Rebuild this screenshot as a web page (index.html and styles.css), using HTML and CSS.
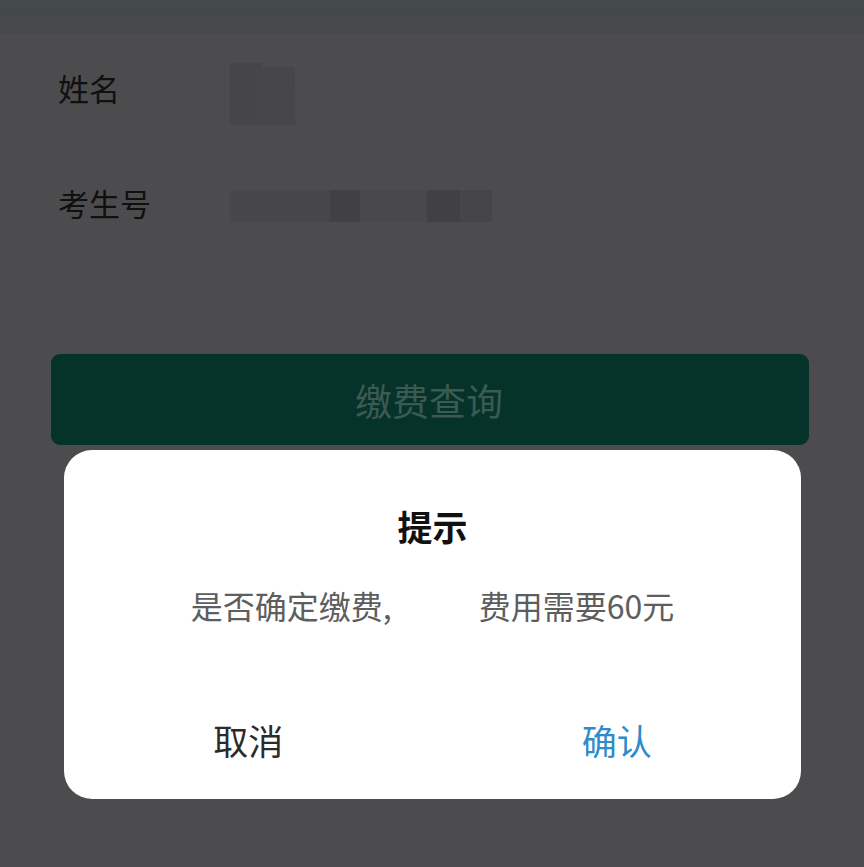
FILE: index.html
```html
<!DOCTYPE html>
<html lang="zh-CN">
<head>
<meta charset="utf-8">
<title>缴费查询</title>
<link rel="stylesheet" href="styles.css">
</head>
<body>
<div class="page">
  <div class="topbar"></div>
  <div class="form">
    <div class="row">
      <div class="label">姓名</div>
      <div class="value name-blur">
        <span class="px px-a"></span><span class="px px-b"></span><span class="px px-c"></span>
      </div>
    </div>
    <div class="row">
      <div class="label">考生号</div>
      <div class="value id-blur">
        <span class="seg s1"></span><span class="seg s2"></span><span class="seg s3"></span><span class="seg s4"></span><span class="seg s5"></span>
      </div>
    </div>
  </div>
  <div class="action">
    <div class="query-btn">缴费查询</div>
  </div>
</div>

<div class="dialog">
  <div class="dlg-title">提示</div>
  <div class="dlg-msg"><span>是否确定缴费,</span><span class="gap"></span><span>费用需要60元</span></div>
  <div class="dlg-btns">
    <div class="dlg-btn cancel">取消</div>
    <div class="dlg-btn ok">确认</div>
  </div>
</div>
</body>
</html>
```

FILE: styles.css
```css
* { box-sizing: border-box; }
html, body {
  margin: 0;
  padding: 0;
  background: #4c4c4e;
  font-family: "Noto Sans CJK SC", "Noto Sans", sans-serif;
}
.page {
  width: 864px;
  height: 867px;
  overflow: hidden;
}
.topbar {
  height: 34px;
  background: linear-gradient(#44494b, #47484b);
}
.form {
  display: flex;
  flex-direction: column;
}
.row {
  height: 115px;
  display: flex;
  align-items: center;
  padding-left: 58px;
}
.label {
  width: 172px;
  font-size: 31px;
  color: #101010;
  line-height: 40px;
  margin-top: -8px;
}
.name-blur {
  display: flex;
  align-items: flex-end;
  height: 62px;
  margin-top: 4px;
}
.px { display: block; }
.px-a { width: 32px; height: 62px; background: #464648; }
.px-b { width: 33px; height: 58px; background: #474749; }
.px-c { width: 35px; height: 30px; background: #4b4b4d; }
.id-blur {
  display: flex;
  height: 32px;
  margin-top: -2px;
}
.seg { display: block; height: 32px; }
.s1 { width: 100px; background: #474749; }
.s2 { width: 30px; background: #414143; }
.s3 { width: 67px; background: #49494b; }
.s4 { width: 33px; background: #414143; }
.s5 { width: 32px; background: #464648; }
.action {
  padding: 90px 55px 0 51px;
}
.query-btn {
  height: 91px;
  border-radius: 9px;
  background: #05332a;
  color: #3b5a51;
  font-size: 37px;
  display: flex;
  align-items: center;
  justify-content: center;
  padding-right: 2px;
}
.dialog {
  position: absolute;
  left: 64px;
  top: 450px;
  width: 737px;
  height: 349px;
  background: #ffffff;
  border-radius: 28px;
  display: flex;
  flex-direction: column;
  align-items: center;
  padding-top: 52px;
}
.dlg-title {
  font-size: 35px;
  font-weight: 700;
  color: #111111;
  line-height: 48px;
}
.dlg-msg {
  margin-top: 34px;
  font-size: 32px;
  line-height: 42px;
  color: #5e5e5e;
  display: flex;
}
.gap { display: inline-block; width: 87px; }
.dlg-btns {
  margin-top: 90px;
  width: 100%;
  display: flex;
}
.dlg-btn {
  flex: 1;
  text-align: center;
  font-size: 35px;
  line-height: 48px;
}
.cancel { color: #2b2b2b; }
.ok { color: #2e8bcc; }
```
